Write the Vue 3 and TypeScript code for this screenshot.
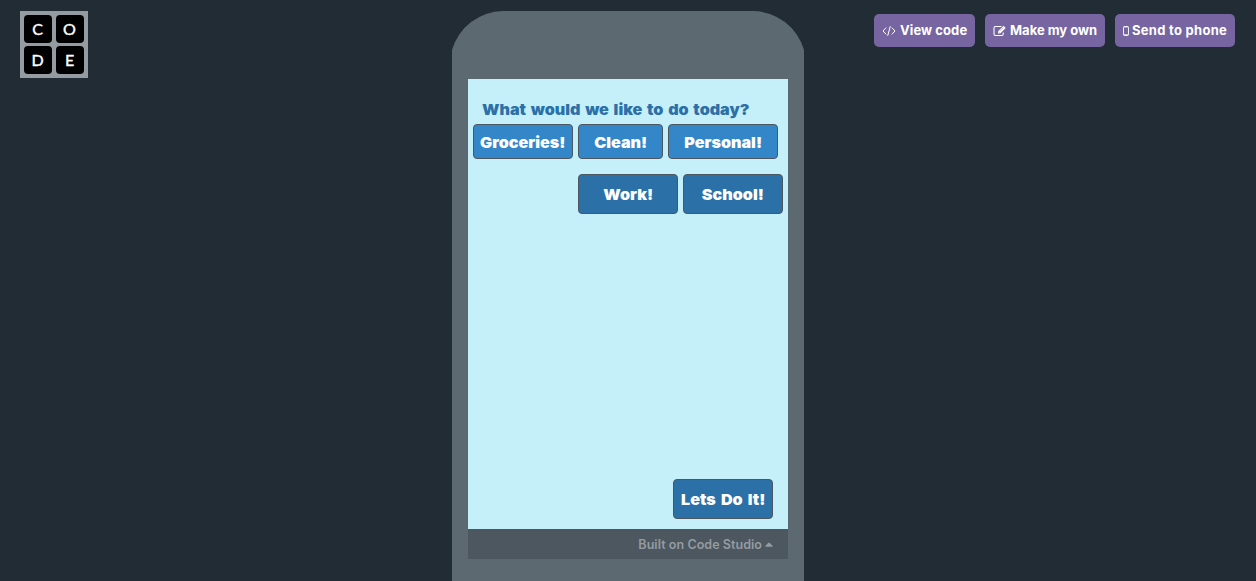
<script setup lang="ts">
interface AppButton { label: string; name: string }
const logo: string[] = ['C', 'O', 'D', 'E']
const firstRow: AppButton[] = [
  { label: 'Groceries!', name: 'groceries' },
  { label: 'Clean!', name: 'clean' },
  { label: 'Personal!', name: 'personal' },
]
const secondRow: AppButton[] = [
  { label: 'Work!', name: 'work' },
  { label: 'School!', name: 'school' },
]
</script>

<template>
  <div class="page">
    <div class="side left">
      <div class="logo">
        <span v-for="l in logo" :key="l" class="tile">{{ l }}</span>
      </div>
    </div>

    <main class="phone">
      <svg class="cap" width="352" height="68" viewBox="0 0 352 68">
        <path d="M0 68V39A54 54 0 0 1 51 0H301A54 54 0 0 1 352 39V68Z" fill="#5d6970" />
      </svg>
      <div class="body">
        <section class="screen">
          <h1><span class="wide question">What would we like to do today?</span></h1>
          <div class="row first">
            <button v-for="b in firstRow" :key="b.name" :class="b.name"><span class="wide">{{ b.label }}</span></button>
          </div>
          <div class="row second">
            <button v-for="b in secondRow" :key="b.name" :class="b.name"><span class="wide">{{ b.label }}</span></button>
          </div>
          <button class="go"><span class="wide">Lets Do It!</span></button>
        </section>
        <footer>
          <span class="built">Built on Code Studio</span>
          <svg width="8" height="5" viewBox="0 0 8 5"><path d="M0.5 4.8V3.8L3.4 .8H4.6L7.5 3.8V4.8Z" fill="#949ca2" /></svg>
        </footer>
      </div>
    </main>

    <nav class="side right">
      <a class="action view">
        <svg width="14" height="12" viewBox="0 0 14 12" fill="none" stroke="#fff" stroke-width="1">
          <path d="M4.2 2.6L1 6L4.2 9.4M9.8 2.6L13 6L9.8 9.4M8.3 1.2L5.7 10.8" />
        </svg>
        <span>View code</span>
      </a>
      <a class="action make">
        <svg width="13" height="12" viewBox="0 0 13 12" fill="none" stroke="#fff" stroke-width="1.1">
          <path d="M8.4 1.5H2.5Q1 1.5 1 3V9Q1 10.5 2.5 10.5H8.7Q10.2 10.5 10.2 9V7.4" />
          <path d="M5 8.4V6.3L10.5.8L12.7 3L7.2 8.4Z" fill="#fff" stroke="none" />
          <path d="M6.7 5.9L10.2 2.4M5.4 6.8L6.7 8" stroke="#7665a0" stroke-width=".5" />
        </svg>
        <span>Make my own</span>
      </a>
      <a class="action send">
        <svg width="6" height="10" viewBox="0 0 6 10" fill="none" stroke="#fff">
          <rect x=".5" y=".5" width="5" height="9" rx=".8" stroke-opacity=".9" />
          <path d="M1 1H5M1 8.7H5" stroke-width=".8" />
        </svg>
        <span>Send to phone</span>
      </a>
    </nav>
  </div>
</template>

<style>
body { background: #222c34; overflow: hidden; }
</style>

<style scoped>
.page {
  box-sizing: border-box; width: 1256px; height: 581px; overflow: hidden;
  display: grid; grid-template-columns: 452px 352px 452px;
  background: #222c34; font-family: Inter, "Liberation Sans", sans-serif;
}
.logo {
  box-sizing: border-box; width: 68px; height: 67px; margin: 11px 0 0 20px; padding: 4px;
  display: grid; grid-template-columns: 28px 28px; grid-template-rows: 28px 28px; gap: 3px 4px;
  background: #949ca2;
}
.tile {
  box-sizing: border-box; padding-right: 1px;
  display: flex; align-items: center; justify-content: center; border-radius: 4px;
  background: #000; color: #fff; font: 400 16px/28px Lato, sans-serif;
  -webkit-text-stroke: 0.4px #fff;
}
.phone { padding-top: 11px; }
.cap { display: block; }
.body { height: 502px; padding: 0 16px; background: #5d6970; }
.screen {
  box-sizing: border-box; height: 450px; padding: 20px 0 0 5px;
  display: flex; flex-direction: column; background: #c5eff9;
}
h1 { margin: 0 0 0 9px; height: 25px; font-size: 15px; line-height: 22px; color: #2c70a8; }
.wide {
  display: inline-block; white-space: nowrap; font-weight: 900; font-size: 15px;
  word-spacing: 1.8px; transform: scaleX(1.075);
}
.question { transform-origin: left; word-spacing: 1.4px; }
.row { display: flex; gap: 5px; }
.first { height: 35px; margin-bottom: 15px; }
.second { height: 40px; margin-left: 105px; }
button {
  box-sizing: border-box; height: 100%; padding: 2px 0 0; display: flex; align-items: center; justify-content: center;
  border: 1px solid #4d575f; border-radius: 4px; color: #fff; background: #2c70a8;
  font-family: inherit; line-height: 20px;
}
.first button { background: #3387c8; }
.groceries, .work, .school, .go { width: 100px; }
.clean { width: 85px; }
.personal { width: 110px; }
.go { height: 40px; margin: auto 15px 10px auto; }
footer {
  box-sizing: border-box; height: 30px; padding: 1px 15px 0 0;
  display: flex; align-items: center; justify-content: flex-end; gap: 3px;
  background: #4d575f; color: #949ca2; font-size: 12.5px; font-weight: 600; letter-spacing: 0.05px;
}
.right { display: flex; gap: 10px; padding: 14px 0 0 70px; }
.action {
  box-sizing: border-box; height: 33px; padding-left: 8px; display: flex; align-items: center; gap: 4px;
  border-radius: 5px; background: #7665a0; color: #fff; font-size: 13px; font-weight: 700; white-space: nowrap;
}
.action span { padding-bottom: 2px; }
.view { width: 101px; }
.view span { letter-spacing: 0.08px; }
.make, .send { width: 120px; }
.send { gap: 3px; }
.send span { letter-spacing: 0.28px; }
</style>
